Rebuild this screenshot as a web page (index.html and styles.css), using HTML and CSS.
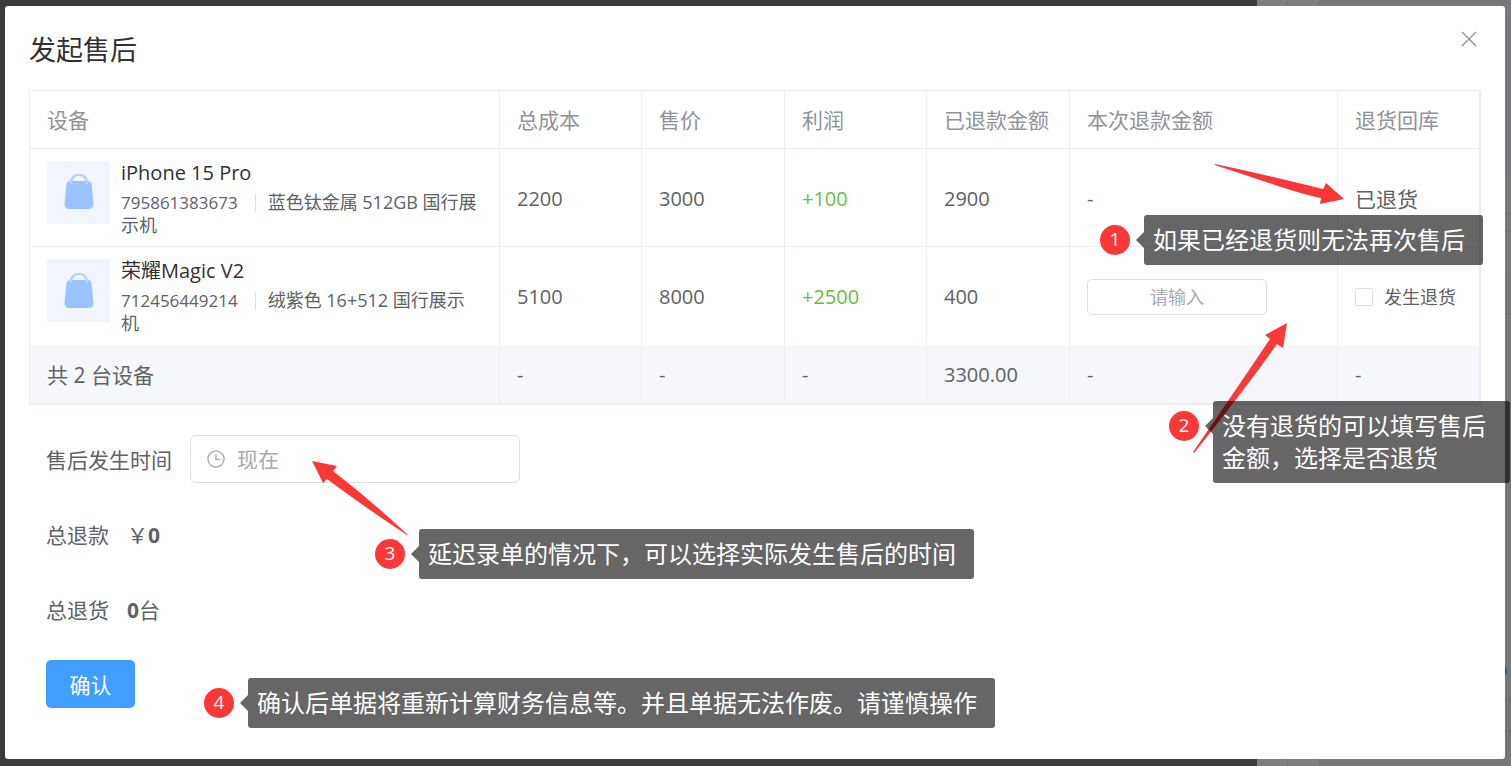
FILE: index.html
```html
<!DOCTYPE html>
<html lang="zh-CN">
<head>
    <meta charset="UTF-8">
    <meta name="viewport" content="width=device-width, initial-scale=1.0">
    <title>发起售后</title>
    <link rel="stylesheet" href="styles.css">
</head>
<body>
<div class="overlay">
    <div class="dialog" role="dialog" aria-labelledby="title">
        <header class="dialog-header">
            <h1 id="title">发起售后</h1>
            <button class="close" type="button" aria-label="关闭">
                <svg width="16" height="16" viewBox="0 0 16 16"><path d="M1 1L15 15M15 1L1 15" fill="none" stroke="#909399" stroke-width="1.4"/></svg>
            </button>
        </header>

        <table class="devices">
            <colgroup>
                <col>
                <col class="col-narrow">
                <col class="col-num">
                <col class="col-narrow">
                <col class="col-num">
                <col class="col-refund">
                <col class="col-narrow">
            </colgroup>
            <thead>
                <tr>
                    <th>设备</th>
                    <th>总成本</th>
                    <th>售价</th>
                    <th>利润</th>
                    <th>已退款金额</th>
                    <th>本次退款金额</th>
                    <th>退货回库</th>
                </tr>
            </thead>
            <tbody>
                <tr>
                    <td>
                        <div class="device">
                            <div class="thumb">
                                <svg width="30" height="36" viewBox="0 0 30 36"><path d="M7 9C7 -2 23 -2 23 9" fill="none" stroke="#b3d4ff" stroke-width="2.5"/><path d="M6 7H24Q27 7 27.5 10L29.500 30Q29.500 35 24.500 35H5.500Q.5 35 .5 30L2.500 10Q3 7 6 7Z" fill="#9ac4ff"/><path d="M7 6V10M23 6V10" stroke="#b3d4ff" stroke-width="2.5"/></svg>
                            </div>
                            <div class="info">
                                <div class="name">iPhone 15 Pro</div>
                                <div class="spec"><span class="imei">795861383673</span><span class="divider"></span>蓝色钛金属 512GB 国行展示机</div>
                            </div>
                        </div>
                    </td>
                    <td class="num">2200</td>
                    <td class="num">3000</td>
                    <td class="num profit">+100</td>
                    <td class="num">2900</td>
                    <td class="num">-</td>
                    <td>已退货</td>
                </tr>
                <tr>
                    <td>
                        <div class="device">
                            <div class="thumb">
                                <svg width="30" height="36" viewBox="0 0 30 36"><path d="M7 9C7 -2 23 -2 23 9" fill="none" stroke="#b3d4ff" stroke-width="2.5"/><path d="M6 7H24Q27 7 27.5 10L29.500 30Q29.500 35 24.500 35H5.500Q.5 35 .5 30L2.500 10Q3 7 6 7Z" fill="#9ac4ff"/><path d="M7 6V10M23 6V10" stroke="#b3d4ff" stroke-width="2.5"/></svg>
                            </div>
                            <div class="info">
                                <div class="name">荣耀Magic V2</div>
                                <div class="spec"><span class="imei">712456449214</span><span class="divider"></span>绒紫色 16+512 国行展示机</div>
                            </div>
                        </div>
                    </td>
                    <td class="num">5100</td>
                    <td class="num">8000</td>
                    <td class="num profit">+2500</td>
                    <td class="num">400</td>
                    <td><input class="refund-input" type="text" placeholder="请输入" aria-label="本次退款金额"></td>
                    <td><label class="check"><input type="checkbox">发生退货</label></td>
                </tr>
            </tbody>
            <tfoot>
                <tr>
                    <td>共 2 台设备</td>
                    <td class="num">-</td>
                    <td class="num">-</td>
                    <td class="num">-</td>
                    <td class="num">3300.00</td>
                    <td class="num">-</td>
                    <td class="num">-</td>
                </tr>
            </tfoot>
        </table>

        <form class="form">
            <div class="row">
                <label for="time">售后发生时间</label>
                <div class="time-box">
                    <svg width="20" height="20" viewBox="0 0 20 20"><path d="M10 1A9 9 0 1 1 10 19A9 9 0 1 1 10 1ZM10 5V10.500H15" fill="none" stroke="#a8abb2" stroke-width="1.5"/></svg>
                    <input id="time" type="text" placeholder="现在">
                </div>
            </div>
            <div class="row"><span>总退款</span><span>￥<b>0</b></span></div>
            <div class="row"><span>总退货</span><span><b>0</b>台</span></div>
            <button class="confirm" type="button">确认</button>
        </form>
    </div>

    <!-- 操作说明 -->
    <svg class="arrow arrow-1" width="130" height="42" viewBox="0 0 130 42"><path d="M0 0Q52 11 108 25L111 19L129 35L105 40L106 34Q90 31 60 21Q30 11 0 1Z"/></svg>
    <svg class="arrow arrow-2" width="94" height="130" viewBox="0 0 94 130"><path d="M0 129Q40 71 77 16L72 12L94 0L90 25L84 21Q50 69 1 130Z"/></svg>
    <svg class="arrow arrow-3" width="96" height="75" viewBox="0 0 96 75"><path d="M96 74Q61 41 21 10L25 5L0 0L11 22L15 18Q51 45 95 74Z"/></svg>
    <div class="note note-1"><span class="badge">1</span><p class="tip">如果已经退货则无法再次售后</p></div>
    <div class="note note-2"><span class="badge">2</span><p class="tip">没有退货的可以填写售后<br>金额，选择是否退货</p></div>
    <div class="note note-3"><span class="badge">3</span><p class="tip">延迟录单的情况下，可以选择实际发生售后的时间</p></div>
    <div class="note note-4"><span class="badge">4</span><p class="tip">确认后单据将重新计算财务信息等。并且单据无法作废。请谨慎操作</p></div>
</div>
</body>
</html>
```
FILE: styles.css
```css
* {
    box-sizing: border-box;
}

body {
    margin: 0;
    font-family: "Open Sans", "Noto Sans CJK SC", sans-serif;
    font-size: 21px;
    color: #606266;
}

.overlay {
    position: relative;
    min-height: 100vh;
    padding: 6px 6px 7px 5px;
    display: flex;
    background: linear-gradient(90deg, #3c3c3c 1257px, #7f7f7f 1257px, #7f7f7f 1287px, #747474 1287px, #747474 1288px, #7f7f7f 1288px, #7f7f7f 1318px, #77797c 1318px);
}

/* page edge showing beside the dialog */
.overlay::before {
    content: "";
    position: absolute;
    top: 6px;
    right: 0;
    bottom: 7px;
    width: 6px;
    background:
        radial-gradient(circle at -4px 665px, #2c4660 5px, #4a6f8c 6px, transparent 7px),
        linear-gradient(transparent 207px, #6d6d6d 207px, #6d6d6d 208px, transparent 208px, transparent 224px, #6d6d6d 224px, #6d6d6d 225px, transparent 225px, transparent 307px, #6d6d6d 307px, #6d6d6d 308px, transparent 308px, transparent 694px, #6a6a6a 694px, #6a6a6a 695px, transparent 695px, transparent 725px, #6a6a6a 725px, #6a6a6a 726px, transparent 726px),
        linear-gradient(#77797c 178px, #797979 178px, #757575);
}

.dialog {
    position: relative;
    flex: 1;
    padding: 24px;
    background: #fff;
    border-radius: 3px;
}

.dialog-header {
    display: flex;
    justify-content: space-between;
    align-items: flex-start;
    height: 60px;
}

h1 {
    margin: 0;
    font-size: 27px;
    font-weight: 400;
    line-height: 40px;
    color: #303133;
}

.close {
    display: flex;
    padding: 1px 4px;
    border: 0;
    background: none;
}

.devices {
    width: 100%;
    table-layout: fixed;
    border-collapse: separate;
    border-spacing: 0;
    border: 1px solid #ebeef5;
}

.col-num {
    width: 143px;
}

.col-narrow {
    width: 142px;
}

.col-refund {
    width: 268px;
}

th, td {
    height: 98px;
    padding: 0 17px;
    border-right: 1px solid #ebeef5;
    border-bottom: 1px solid #ebeef5;
    text-align: left;
    font-weight: 400;
    line-height: 30px;
    white-space: nowrap;
}

td {
    padding-top: 2px;
}

th {
    height: 58px;
    color: #909399;
}

tbody tr:last-child td {
    border-bottom: 0;
}

tfoot td {
    height: 59px;
    background: #f5f7fa;
}

.num {
    font-size: 20px;
}

.profit {
    color: #67c23a;
}

.device {
    display: flex;
    align-items: flex-start;
    gap: 11px;
}

.thumb {
    display: flex;
    flex: none;
    align-items: center;
    justify-content: center;
    width: 63px;
    height: 63px;
    background: #f2f4ff;
}

.info {
    white-space: normal;
}

.name {
    font-size: 20px;
    line-height: 24px;
    color: #303133;
}

.spec {
    padding-top: 6px;
    font-size: 18px;
    line-height: 23px;
}

.imei {
    font-size: 17px;
}

.divider {
    display: inline-block;
    width: 1px;
    height: 18px;
    margin: 0 12px 0 17px;
    background: #dcdfe6;
    vertical-align: -3px;
}

input {
    font-family: inherit;
    color: #606266;
}

input::placeholder {
    color: #a8abb2;
    opacity: 1;
}

.refund-input {
    display: block;
    width: 180px;
    height: 36px;
    border: 1px solid #dcdfe6;
    border-radius: 5px;
    font-size: 18px;
    text-align: center;
}

.check {
    display: flex;
    align-items: center;
    gap: 11px;
    font-size: 18px;
}

.check input {
    appearance: none;
    width: 18px;
    height: 18px;
    margin: 0;
    border: 1px solid #dcdfe6;
    border-radius: 2px;
    background: #fff;
}

.form {
    display: flex;
    flex-direction: column;
    align-items: flex-start;
    gap: 27px;
    padding: 30px 17px 0;
}

.row {
    display: flex;
    align-items: center;
    gap: 18px;
    height: 48px;
}

.time-box {
    display: flex;
    align-items: center;
    gap: 12px;
    width: 330px;
    height: 48px;
    padding: 0 16px;
    border: 1px solid #dcdfe6;
    border-radius: 6px;
}

.time-box input {
    width: 100%;
    padding: 0;
    border: 0;
    outline: 0;
    font-size: 21px;
}

.confirm {
    width: 89px;
    height: 48px;
    border: 0;
    border-radius: 5px;
    background: #409eff;
    color: #fff;
    font-family: inherit;
    font-size: 21px;
}

.arrow {
    position: absolute;
    fill: #fb3838;
}

.arrow-1 {
    left: 1215px;
    top: 164px;
}

.arrow-2 {
    left: 1193px;
    top: 323px;
}

.arrow-3 {
    left: 312px;
    top: 461px;
}

.note {
    position: absolute;
    display: flex;
    align-items: center;
    gap: 14px;
}

.note-1 {
    left: 1100px;
    top: 215px;
}

.note-2 {
    left: 1169px;
    top: 401px;
}

.note-3 {
    left: 375px;
    top: 529px;
}

.note-4 {
    left: 204px;
    top: 678px;
}

.badge {
    width: 30px;
    height: 30px;
    border-radius: 50%;
    background: #fb3838;
    color: #fff;
    font-size: 19px;
    line-height: 29px;
    text-align: center;
}

.tip {
    position: relative;
    margin: 0;
    padding: 9px 18px 9px 9px;
    border-radius: 3px;
    background: rgba(0, 0, 0, 0.6);
    color: #fff;
    font-size: 24px;
    line-height: 32px;
    white-space: nowrap;
}

.tip::before {
    content: "";
    position: absolute;
    left: -8px;
    top: 17px;
    border: 8px solid transparent;
    border-left: 0;
    border-right-color: rgba(0, 0, 0, 0.6);
}

.note-2 .badge {
    align-self: flex-start;
    margin-top: 10px;
}

.note-2 .tip {
    padding-right: 24px;
}
```
